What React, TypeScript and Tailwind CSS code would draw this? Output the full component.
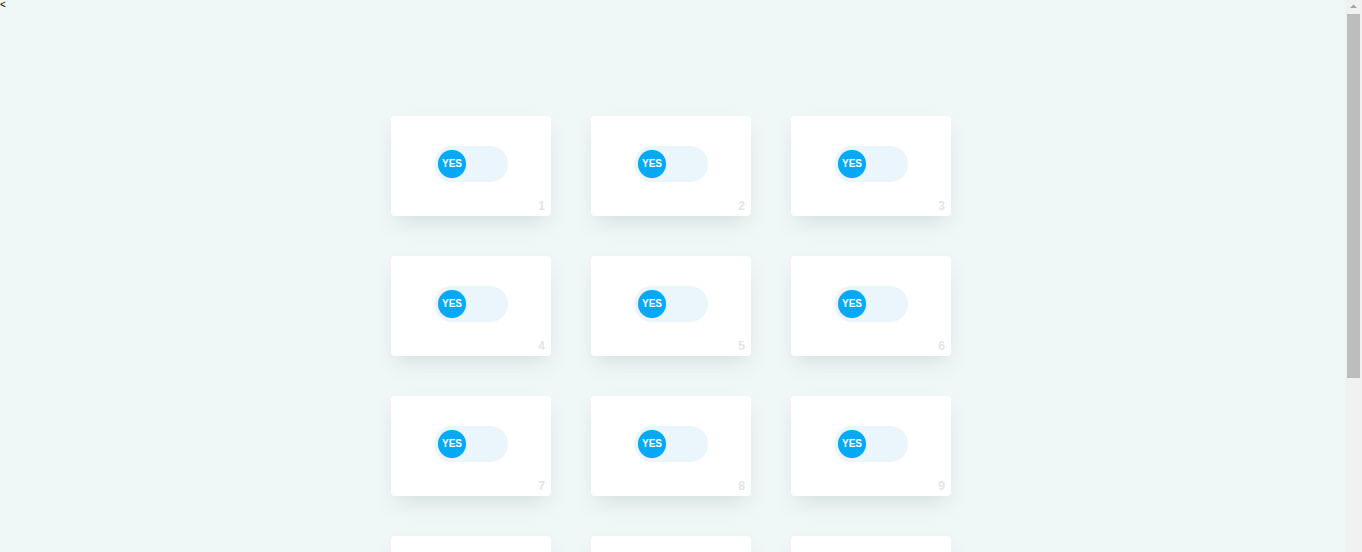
const items = Array.from({ length: 12 }, (_, i) => i + 1);

function Toggle() {
  return (
    <div className="flex h-9 w-[74px] items-center rounded-full bg-[#ebf6fc] pl-1">
      <span className="flex h-7 w-7 items-center justify-center rounded-full bg-[#03a9f4] text-[10px] font-bold leading-none text-white shadow-[0_0_0_1px_rgba(3,169,244,0.08)]">
        YES
      </span>
    </div>
  );
}

function Card({ n }: { n: number }) {
  return (
    <div className="flex h-[100px] w-40 flex-col items-center rounded bg-white pt-[30px] shadow-[0_10px_20px_-4px_rgba(0,70,70,0.13)]">
      <Toggle />
      <span className="mt-auto self-end pb-[3px] pr-[6px] text-xs font-bold leading-[14px] text-[#e2e5e8]">{n}</span>
    </div>
  );
}

// headless shot has no native scrollbar, so draw the classic one
function Scrollbar() {
  return (
    <div className="fixed right-0 top-0 flex h-full w-[17px] flex-col items-center bg-[#f1f1f1]">
      <svg width="17" height="14" viewBox="0 0 17 14" className="shrink-0">
        <path d="M5 8 L8.5 4.5 L12 8 Z" fill="#a3a3a3" />
      </svg>
      <div className="h-[364px] w-[13px] bg-[#bdbdbd]" />
    </div>
  );
}

export default function App() {
  return (
    <div className="min-h-[836px] bg-[#f0f8f7] pr-[17px] font-['Liberation_Sans',Arial,sans-serif] text-black">
      <div className="h-4 text-[10px] leading-[10px]">&lt;</div>
      <div className="flex justify-center pb-[200px] pr-[3px] pt-[100px]">
        <div className="grid grid-cols-[160px_160px_160px] gap-10">
          {items.map((n) => (
            <Card key={n} n={n} />
          ))}
        </div>
      </div>
      <Scrollbar />
    </div>
  );
}
